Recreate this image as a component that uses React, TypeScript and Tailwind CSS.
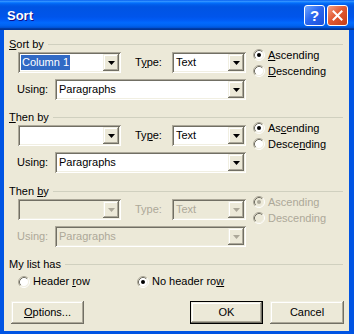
import React from "react";

const sunken =
  "shadow-[inset_1px_1px_#ACA899,inset_-1px_-1px_#FFFFFF,inset_2px_2px_#716F64,inset_-2px_-2px_#F1EFE2]";
const raised =
  "shadow-[inset_-1px_-1px_#716F64,inset_1px_1px_#F1EFE2,inset_-2px_-2px_#ACA899,inset_2px_2px_#FFFFFF]";

// text with one underlined access key
function Mn({ text, at }: { text: string; at?: number }) {
  if (at === undefined) return <>{text}</>;
  return (
    <>
      {text.slice(0, at)}
      <span className="underline decoration-1 underline-offset-[1px]">{text[at]}</span>
      {text.slice(at + 1)}
    </>
  );
}

function Arrow({ disabled }: { disabled?: boolean }) {
  return (
    <svg width="7" height="4" viewBox="0 0 7 4">
      <path d="M0 0h7L3.5 4z" fill={disabled ? "#ACA899" : "#000"} />
    </svg>
  );
}

function Combo({
  w,
  value,
  selected,
  disabled,
}: {
  w: string;
  value?: string;
  selected?: boolean;
  disabled?: boolean;
}) {
  return (
    <div className={`flex h-[21px] p-[2px] ${w} ${disabled ? "bg-[#ECE9D8]" : "bg-white"} ${sunken}`}>
      <div className="flex min-w-0 flex-1 items-center pl-[1px]">
        {value && (
          <span
            className={`h-[15px] px-[1px] leading-[15px] ${
              selected ? "bg-[#316AC5] text-white" : disabled ? "text-[#ACA899]" : "text-black"
            }`}
          >
            {value}
          </span>
        )}
      </div>
      <div className={`flex w-[16px] items-center justify-center bg-[#ECE9D8] ${raised}`}>
        <Arrow disabled={disabled} />
      </div>
    </div>
  );
}

function Radio({
  label,
  at,
  checked,
  disabled,
  className = "",
}: {
  label: string;
  at?: number;
  checked?: boolean;
  disabled?: boolean;
  className?: string;
}) {
  return (
    <div className={`flex h-[16px] items-center gap-[3px] ${className}`}>
      <svg width="12" height="12" viewBox="0 0 12 12" className="shrink-0">
        <circle cx="6" cy="6" r="4.5" fill={disabled ? "#ECE9D8" : "#fff"} />
        <path d="M2.11 9.89A5.5 5.5 0 0 1 9.89 2.11" stroke="#ACA899" fill="none" />
        <path d="M9.89 2.11A5.5 5.5 0 0 1 2.11 9.89" stroke="#fff" fill="none" />
        <path d="M2.82 9.18A4.5 4.5 0 0 1 9.18 2.82" stroke="#716F64" fill="none" />
        <path d="M9.18 2.82A4.5 4.5 0 0 1 2.82 9.18" stroke="#F1EFE2" fill="none" />
        {checked && <circle cx="6" cy="6" r="2" fill={disabled ? "#ACA899" : "#000"} />}
      </svg>
      <span className={disabled ? "text-[#ACA899]" : "text-black"}>
        <Mn text={label} at={at} />
      </span>
    </div>
  );
}

function Group({
  title,
  at,
  className = "",
  children,
}: {
  title: string;
  at?: number;
  className?: string;
  children: React.ReactNode;
}) {
  return (
    <div className={`flex flex-col ${className}`}>
      <div className="flex h-[13px] items-center pl-[5px] pr-[6px]">
        <span className="text-black">
          <Mn text={title} at={at} />
        </span>
        <div className="ml-[4px] h-px flex-1 bg-[#D0D0BF]" />
      </div>
      {children}
    </div>
  );
}

type Keys = { type?: number; asc?: number; desc?: number };

function SortRow({
  value,
  selected,
  disabled,
  keys,
}: {
  value?: string;
  selected?: boolean;
  disabled?: boolean;
  keys: Keys;
}) {
  const dim = disabled ? "text-[#ACA899]" : "text-black";
  return (
    <div className="mt-[1px] flex pl-[13px]">
      <div className="flex flex-col">
        <div className="flex h-[21px] items-center">
          <Combo w="w-[103px] ml-[1px]" value={value} selected={selected} disabled={disabled} />
          <span className={`ml-[14px] w-[37px] ${dim}`}>
            <Mn text="Type:" at={keys.type} />
          </span>
          <Combo w="w-[74px]" value="Text" disabled={disabled} />
        </div>
        <div className="mt-[6px] flex h-[21px] items-center">
          <span className={`w-[38px] ${dim}`}>Using:</span>
          <Combo w="w-[191px]" value="Paragraphs" disabled={disabled} />
        </div>
      </div>
      <div className="ml-[7px] mt-[-5px] flex flex-col">
        <Radio label="Ascending" at={keys.asc} checked disabled={disabled} />
        <Radio label="Descending" at={keys.desc} disabled={disabled} />
      </div>
    </div>
  );
}

function Button({
  children,
  w,
  isDefault,
}: {
  children: React.ReactNode;
  w: string;
  isDefault?: boolean;
}) {
  return (
    <div className={`flex h-[23px] ${w} ${isDefault ? "border border-black" : ""}`}>
      <div className={`flex flex-1 items-center justify-center bg-[#ECE9D8] text-black ${raised}`}>
        {children}
      </div>
    </div>
  );
}

export default function App() {
  return (
    <div className="flex h-[334px] w-[354px] flex-col bg-[#0054E3] font-['Liberation_Sans',Arial,sans-serif] text-[11px] leading-[13px]">
      <div className="flex h-[30px] shrink-0 items-center bg-[linear-gradient(to_bottom,#0058ee_0%,#3593ff_4%,#288eff_6%,#127dff_8%,#036ffc_10%,#0262ee_14%,#0057e5_20%,#0054e3_24%,#0055eb_56%,#005bf5_66%,#026afe_76%,#0062ef_86%,#0052d6_92%,#0040ab_94%,#003092_100%)] pl-[7px] pr-[6px]">
        <span className="flex-1 text-[13px] font-bold text-white [text-shadow:1px_1px_#0f1089]">Sort</span>
        <div className="flex gap-[2px]">
          <div className="flex h-[21px] w-[21px] items-center justify-center rounded-[3px] border border-white bg-[linear-gradient(135deg,#6FA6FF_0%,#2C68F0_45%,#1C50DA_100%)] text-[15px] font-bold leading-none text-white">
            ?
          </div>
          <div className="flex h-[21px] w-[21px] items-center justify-center rounded-[3px] border border-white bg-[linear-gradient(135deg,#F3A084_0%,#E25A33_45%,#C63D17_100%)]">
            <svg width="11" height="11" viewBox="0 0 11 11">
              <path d="M1.5 1.5l8 8M9.5 1.5l-8 8" stroke="#fff" strokeWidth="2" strokeLinecap="square" />
            </svg>
          </div>
        </div>
      </div>
      <div className="flex flex-1 pb-[3px] pl-[4px] pr-[5px]">
        <div className="flex flex-1 flex-col bg-[#ECE9D8] pt-[8px]">
          <Group title="Sort by" at={0}>
            <SortRow value="Column 1" selected keys={{ type: 1, asc: 0, desc: 0 }} />
          </Group>
          <Group title="Then by" at={0} className="mt-[11px]">
            <SortRow keys={{ type: 2, asc: 2, desc: 5 }} />
          </Group>
          <Group title="Then by" at={5} className="mt-[12px]">
            <SortRow disabled keys={{}} />
          </Group>
          <Group title="My list has" className="mt-[11px]">
            <div className="mt-[4px] flex h-[13px] items-center pl-[14px]">
              <Radio label="Header row" at={7} className="w-[119px]" />
              <Radio label="No header row" at={12} checked />
            </div>
          </Group>
          <div className="mt-[13px] flex pl-[7px]">
            <Button w="w-[73px]">
              <Mn text="Options..." at={0} />
            </Button>
            <Button w="w-[73px] ml-[106px]" isDefault>
              OK
            </Button>
            <Button w="w-[74px] ml-[7px]">Cancel</Button>
          </div>
        </div>
      </div>
    </div>
  );
}
